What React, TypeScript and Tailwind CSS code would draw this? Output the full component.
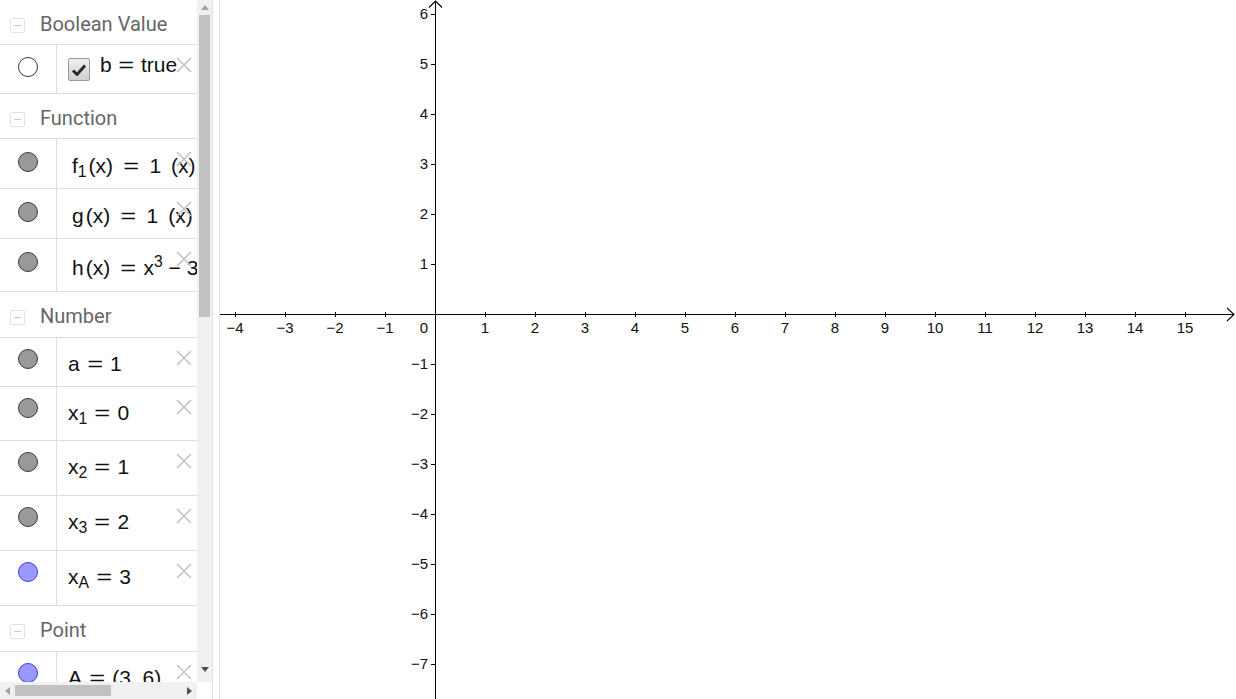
import React from "react";

type CircleKind = "empty" | "gray" | "blue";

function Dot({ kind }: { kind: CircleKind }) {
  if (kind === "empty")
    return <div className="w-[20px] h-[20px] rounded-full border border-[#333333] bg-white" />;
  if (kind === "blue")
    return <div className="w-[20px] h-[20px] rounded-full border border-[#3a3af0] bg-[#9999ff]" />;
  return <div className="w-[20px] h-[20px] rounded-full border border-[#3a3a3a] bg-[#999999]" />;
}

function XIcon() {
  return (
    <svg width="16" height="16" viewBox="0 0 16 16">
      <path d="M1 1 L15 15 M15 1 L1 15" stroke="#c4c4c4" strokeWidth="1.6" fill="none" />
    </svg>
  );
}

function Eq({ m }: { m: string }) {
  return <span className={`inline-block scale-x-[1.3] ${m}`}>=</span>;
}

function Header({ title, h }: { title: string; h: string }) {
  return (
    <div className={`flex items-start border-b border-[#dddddd] ${h}`}>
      <div className="ml-[10px] mt-[18px] w-[15px] h-[15px] border border-[#e2e2e2] rounded-[2px] flex items-center justify-center">
        <div className="w-[7px] h-[1px] bg-[#c6c6c6]" />
      </div>
      <div className="ml-[15px] pt-[12px] text-[20px] leading-[25px] text-[#666666] font-['Roboto',sans-serif] whitespace-nowrap">
        {title}
      </div>
    </div>
  );
}

function Row({
  h,
  kind,
  children,
  pad,
  dotPad = "pt-[12px]",
}: {
  h: string;
  kind: CircleKind;
  children: React.ReactNode;
  pad: string;
  dotPad?: string;
}) {
  return (
    <div className={`flex border-b border-[#dddddd] ${h}`}>
      <div className={`w-[57px] shrink-0 border-r border-[#dddddd] flex justify-center ${dotPad}`}>
        <Dot kind={kind} />
      </div>
      <div className="relative flex-1 overflow-hidden">
        <div
          className={`whitespace-nowrap font-['Liberation_Sans',Arial,sans-serif] text-[21px] leading-[24px] text-[#111111] ${pad}`}
        >
          {children}
        </div>
        <div className="absolute right-[5px] top-[12px]">
          <XIcon />
        </div>
      </div>
    </div>
  );
}

function Checkbox() {
  return (
    <span className="inline-flex align-top w-[22px] h-[23px] rounded-[2px] border border-[#9a9a9a] bg-gradient-to-b from-[#f0f0f0] to-[#cfcfcf] items-center justify-center">
      <svg width="16" height="14" viewBox="0 0 16 14">
        <path d="M2 7.5 L6 11.5 L14 2.5" stroke="#2b2b2b" strokeWidth="3" fill="none" strokeLinejoin="round" />
      </svg>
    </span>
  );
}

function AlgebraPanel() {
  return (
    <div className="w-[212px] h-[699px] shrink-0 flex flex-col bg-white">
      <div className="flex h-[682px]">
        <div className="w-[197px] overflow-hidden">
          <Header title="Boolean Value" h="h-[45px]" />
          <div className="flex h-[49px] border-b border-[#dddddd]">
            <div className="w-[57px] shrink-0 border-r border-[#dddddd] flex justify-center pt-[12px]">
              <Dot kind="empty" />
            </div>
            <div className="relative flex-1 overflow-hidden">
              <div className="flex items-start whitespace-nowrap pl-[11px] pt-[13px]">
                <Checkbox />
                <span className="ml-[10px] -mt-[5px] font-['Liberation_Sans',Arial,sans-serif] text-[21px] leading-[24px] text-[#111111]">
                  b<Eq m="ml-[8px] mr-[9px]" />true
                </span>
              </div>
              <div className="absolute right-[5px] top-[12px]">
                <XIcon />
              </div>
            </div>
          </div>
          <Header title="Function" h="h-[45px]" />
          <Row h="h-[50px]" kind="gray" pad="pl-[15px] pt-[15px]" dotPad="pt-[13px]">
            f<sub>1</sub>
            <span className="ml-[2px]">(x)</span>
            <Eq m="ml-[12px] mr-[12px]" />1<span className="ml-[10px]">(x)</span>
          </Row>
          <Row h="h-[50px]" kind="gray" pad="pl-[15px] pt-[15px]" dotPad="pt-[13px]">
            g<span className="ml-[2px]">(x)</span>
            <Eq m="ml-[12px] mr-[12px]" />1<span className="ml-[10px]">(x)</span>
          </Row>
          <Row h="h-[53px]" kind="gray" pad="pl-[15px] pt-[17px]" dotPad="pt-[13px]">
            h<span className="ml-[2px]">(x)</span>
            <Eq m="ml-[12px] mr-[9px]" />x<sup>3</sup> − 3
          </Row>
          <Header title="Number" h="h-[46px]" />
          <Row h="h-[49px]" kind="gray" pad="pl-[11px] pt-[14px]" dotPad="pt-[11px]">
            a<Eq m="ml-[9px] mr-[9px]" />1
          </Row>
          <Row h="h-[54px]" kind="gray" pad="pl-[11px] pt-[14px]" dotPad="pt-[11px]">
            x<sub>1</sub>
            <Eq m="ml-[9px] mr-[9px]" />0
          </Row>
          <Row h="h-[55px]" kind="gray" pad="pl-[11px] pt-[14px]" dotPad="pt-[11px]">
            x<sub>2</sub>
            <Eq m="ml-[9px] mr-[9px]" />1
          </Row>
          <Row h="h-[55px]" kind="gray" pad="pl-[11px] pt-[14px]" dotPad="pt-[11px]">
            x<sub>3</sub>
            <Eq m="ml-[9px] mr-[9px]" />2
          </Row>
          <Row h="h-[55px]" kind="blue" pad="pl-[11px] pt-[14px]" dotPad="pt-[11px]">
            x<sub>A</sub>
            <Eq m="ml-[9px] mr-[9px]" />3
          </Row>
          <Header title="Point" h="h-[46px]" />
          <Row h="h-[55px]" kind="blue" pad="pl-[11px] pt-[14px]" dotPad="pt-[11px]">
            A<Eq m="ml-[9px] mr-[9px]" />(3, 6)
          </Row>
        </div>
        {/* vertical scrollbar */}
        <div className="w-[15px] h-full bg-[#f1f1f1] flex flex-col items-center">
          <div className="h-[15px] flex items-center justify-center">
            <svg width="8" height="5" viewBox="0 0 8 5">
              <polygon points="0,5 8,5 4,0" fill="#a3a3a3" />
            </svg>
          </div>
          <div className="w-[11px] h-[302px] bg-[#c1c1c1]" />
          <div className="flex-1" />
          <div className="h-[18px] flex items-start justify-center pt-[3px]">
            <svg width="8" height="5" viewBox="0 0 8 5">
              <polygon points="0,0 8,0 4,5" fill="#505050" />
            </svg>
          </div>
        </div>
      </div>
      {/* horizontal scrollbar */}
      <div className="flex h-[17px]">
        <div className="w-[197px] h-full bg-[#f1f1f1] flex items-center">
          <div className="w-[15px] flex justify-center">
            <svg width="5" height="8" viewBox="0 0 5 8">
              <polygon points="5,0 5,8 0,4" fill="#a3a3a3" />
            </svg>
          </div>
          <div className="w-[96px] h-[11px] bg-[#c1c1c1]" />
          <div className="flex-1" />
          <div className="w-[15px] flex justify-center">
            <svg width="5" height="8" viewBox="0 0 5 8">
              <polygon points="0,0 0,8 5,4" fill="#505050" />
            </svg>
          </div>
        </div>
        <div className="flex-1 bg-white" />
      </div>
    </div>
  );
}

function Graph() {
  const ox = 435;
  const oy = 314;
  const u = 50;
  const xs: number[] = [];
  for (let i = -4; i <= 15; i++) if (i !== 0) xs.push(i);
  const ys: number[] = [];
  for (let i = -7; i <= 6; i++) if (i !== 0) ys.push(i);
  const lab = (n: number) => (n < 0 ? "\u2212" + Math.abs(n) : String(n));
  return (
    <div className="flex-1 h-[699px] bg-white overflow-hidden">
      <svg width="1016" height="699" viewBox="220 0 1016 699" className="block">
        <g stroke="#000" strokeWidth="1" fill="none" shapeRendering="crispEdges">
          <line x1="220" y1={oy + 0.5} x2="1234" y2={oy + 0.5} />
          <line x1={ox + 0.5} y1="1" x2={ox + 0.5} y2="699" />
          {xs.map((i) => (
            <line key={"tx" + i} x1={ox + i * u + 0.5} y1={oy - 2} x2={ox + i * u + 0.5} y2={oy + 3} />
          ))}
          {ys.map((i) => (
            <line key={"ty" + i} x1={ox - 4} y1={oy - i * u + 0.5} x2={ox} y2={oy - i * u + 0.5} />
          ))}
        </g>
        <g stroke="#000" strokeWidth="1.1" fill="none">
          <polyline points={`1227,308 1234,314.5 1227,321`} />
          <polyline points={`429,7.5 435.5,1 442,7.5`} />
        </g>
        <g fill="#111" fontFamily="'Liberation Sans', Arial, sans-serif" fontSize="15">
          {xs.map((i) => (
            <text key={"lx" + i} x={ox + i * u} y={333} textAnchor="middle">
              {lab(i)}
            </text>
          ))}
          <text x={424} y={333} textAnchor="middle">
            0
          </text>
          {ys.map((i) => (
            <text key={"ly" + i} x={428} y={oy - i * u + 5} textAnchor="end">
              {lab(i)}
            </text>
          ))}
        </g>
      </svg>
    </div>
  );
}

export default function App() {
  return (
    <div className="flex w-[1236px] h-[699px] overflow-hidden bg-white">
      <AlgebraPanel />
      <div className="w-[8px] h-[699px] shrink-0 border-x border-[#e0e0e0] bg-white" />
      <Graph />
    </div>
  );
}
